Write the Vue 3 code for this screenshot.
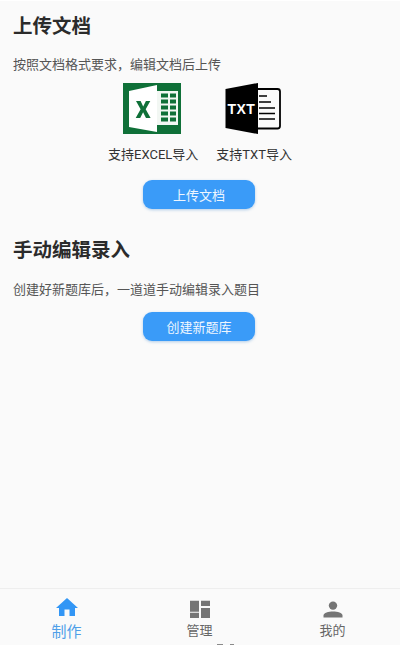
<script setup>
const formats = [
  { id: 'excel', label: '支持EXCEL导入' },
  { id: 'txt', label: '支持TXT导入' },
]
</script>

<template>
  <div class="page">
    <main class="content">
      <section class="upload">
        <h2 class="title">上传文档</h2>
        <p class="desc">按照文档格式要求，编辑文档后上传</p>
        <div class="formats">
          <div v-for="f in formats" :key="f.id" class="format">
            <svg v-if="f.id === 'excel'" class="file-icon" viewBox="0 0 58 51" width="58" height="51">
              <rect width="58" height="51" fill="#0f7038" />
              <path d="M6 8 L34 2 V49 L6 44 Z" fill="#fff" />
              <path d="M34 8 H55 V42 H34 Z" fill="#f2f7f3" />
              <path d="M38 10.5 H45 V14.5 H38Z M47 10.5 H53 V14.5 H47Z M38 16.5 H45 V20.5 H38Z M47 16.5 H53 V20.5 H47Z M38 22.5 H45 V26.5 H38Z M47 22.5 H53 V26.5 H47Z M38 28.5 H45 V32.5 H38Z M47 28.5 H53 V32.5 H47Z M38 34.5 H45 V38.5 H38Z M47 34.5 H53 V38.5 H47Z" fill="#0f7038" />
              <path d="M13 18 H17.6 L20.2 23.4 L22.9 18 H27.3 L22.7 26.3 L27.6 35 H23 L20.1 29.3 L17.2 35 H12.7 L17.6 26.3 Z" fill="#0f7038" />
            </svg>
            <svg v-else class="file-icon" viewBox="0 0 56 51" width="56" height="51">
              <path d="M32 6 H52.5 Q55 6 55 8.5 V43 Q55 45.5 52.5 45.5 H32" fill="#fafafa" stroke="#000" stroke-width="1.8" />
              <path d="M34 13 H42 M34 19 H46 M34 25 H50 M34 30.5 H50 M34 36 H50" stroke="#000" stroke-width="1.4" />
              <path d="M0.5 6 L33 0 V51 L0.5 45 Z" fill="#000" />
              <text x="2.5" y="30.5" class="txt-mark">TXT</text>
            </svg>
            <span class="format-label">{{ f.label }}</span>
          </div>
        </div>
        <button class="action action-upload">上传文档</button>
      </section>

      <section class="manual">
        <h2 class="title">手动编辑录入</h2>
        <p class="desc">创建好新题库后，一道道手动编辑录入题目</p>
        <button class="action action-create">创建新题库</button>
      </section>
    </main>

    <nav class="tabbar">
      <div class="tab active">
        <svg viewBox="0 0 22 22" width="22" height="22" class="tab-icon">
          <path d="M11 0 L22 10 H19 V18 H13.5 V11.5 H8.5 V18 H3 V10 H0 Z" fill="#3296f5" />
        </svg>
        <span class="tab-label">制作</span>
      </div>
      <div class="tab">
        <svg viewBox="0 0 22 22" width="22" height="22" class="tab-icon">
          <path d="M1 2.7 H10 V13.7 H1 Z M12 2.7 H21 V8 H12 Z M12 10 H21 V20 H12 Z M1 14.7 H10 V20 H1 Z" fill="#757575" />
        </svg>
        <span class="tab-label">管理</span>
      </div>
      <div class="tab">
        <svg viewBox="0 0 22 22" width="22" height="22" class="tab-icon">
          <circle cx="11" cy="7.6" r="4.2" fill="#757575" />
          <path d="M1.5 19.4 V17.4 C1.5 15 6.5 13.6 11 13.6 C15.5 13.6 20.5 15 20.5 17.4 V19.4 Z" fill="#757575" />
        </svg>
        <span class="tab-label">我的</span>
      </div>
      <span class="cut-off cut-a"></span>
      <span class="cut-off cut-b"></span>
    </nav>
  </div>
</template>

<style>
html, body { margin: 0; padding: 0; background: #fafafa; }
</style>

<style scoped>
.page {
  width: 400px;
  height: 645px;
  display: flex;
  flex-direction: column;
  overflow: hidden;
  box-sizing: border-box;
  border-top: 1px solid #fff;
  background: #fafafa;
  font-family: Roboto, "Noto Sans CJK SC", sans-serif;
}
.content { flex: 1; padding: 14px 15px 0 13px; }
.title {
  margin: 0;
  font-size: 19.5px;
  line-height: 24px;
  font-weight: 700;
  color: #2b2b2b;
}
.desc {
  margin: 0;
  padding-top: 16px;
  font-size: 13px;
  line-height: 20px;
  color: #555;
}
.manual .desc { padding-top: 17px; }
.formats {
  display: flex;
  justify-content: center;
  gap: 18px;
  padding-top: 8px;
  padding-left: 2px;
}
.format { display: flex; flex-direction: column; align-items: center; }
.file-icon { display: block; margin-right: 2px; }
.format-label {
  margin-top: 11px;
  font-size: 13px;
  line-height: 20px;
  color: #333;
}
.action {
  display: block;
  width: 112px;
  height: 29px;
  margin: 0 auto;
  padding: 0;
  border: none;
  border-radius: 9px;
  background: #3a9bf8;
  box-shadow: 0 1px 3px rgba(40, 120, 200, 0.35);
  color: #eef6ff;
  font-family: inherit;
  font-size: 13px;
}
.action-upload { margin-top: 15px; }
.manual { padding-top: 30px; }
.action-create { margin-top: 12px; }
.tabbar {
  position: relative;
  height: 56px;
  display: flex;
  border-top: 1px solid #eeeeee;
  background: #fafafa;
}
.tab {
  flex: 0 0 133px;
  display: flex;
  flex-direction: column;
  align-items: center;
  padding-top: 9px;
  box-sizing: border-box;
}
.tab-icon { display: block; }
.tab-label {
  margin-top: 2px;
  font-size: 13px;
  line-height: 18px;
  color: #666;
}
.tab.active .tab-label { margin-top: 3px; font-size: 15px; color: #4f9fe8; }
.cut-off {
  position: absolute;
  bottom: 0;
  height: 1px;
  background: #8a8a8a;
}
.cut-a { left: 217px; width: 6px; }
.cut-b { left: 230px; width: 4px; }
.txt-mark {
  font-family: "Liberation Sans", sans-serif;
  font-size: 14px;
  font-weight: 700;
  letter-spacing: 0.4px;
  fill: #fff;
}
</style>
